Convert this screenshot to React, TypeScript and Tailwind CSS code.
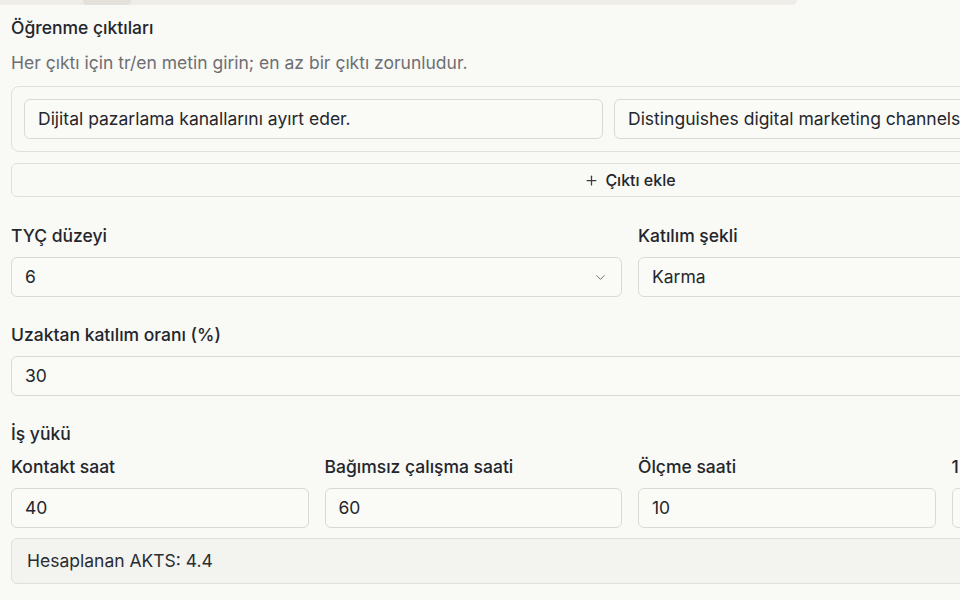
import React from "react";
import { ChevronDown, Plus } from "lucide-react";

const inputCls =
  "h-[40px] w-full rounded-[6px] border border-[#dcd9d2] bg-[#fafaf7] px-[13px] flex items-center text-[17.5px] leading-[20px] text-[#24272d] whitespace-nowrap overflow-hidden";

function Label({ children, className = "" }: { children: React.ReactNode; className?: string }) {
  return (
    <div className={"text-[17.5px] font-medium leading-[20px] text-[#23262c] whitespace-nowrap " + className}>
      {children}
    </div>
  );
}

export default function App() {
  return (
    <div
      className="w-[960px] h-[600px] overflow-hidden bg-[#f9f9f6]"
      style={{ fontFamily: "Inter, 'Noto Sans', sans-serif" }}
    >
      <div className="relative h-[5px] w-[797px] rounded-br-[8px] bg-[#efede8]">
        <div className="absolute left-[83px] top-0 h-[5px] w-[48px] rounded-b-[4px] bg-[#e4e1db]" />
      </div>
      <div className="w-[1238px] ml-[11px]">
        <Label className="mt-[13px]">Öğrenme çıktıları</Label>
        <div className="mt-[15px] text-[17.5px] leading-[20px] text-[#6e6f72] whitespace-nowrap">
          Her çıktı için tr/en metin girin; en az bir çıktı zorunludur.
        </div>
        <div className="mt-[13px] rounded-[8px] border border-[#e2dfd8] p-[12px] grid grid-cols-[1fr_1fr_32px] gap-[11px] items-center">
          <div className={inputCls}>Dijital pazarlama kanallarını ayırt eder.</div>
          <div className={inputCls}>Distinguishes digital marketing channels.</div>
          <div className="h-[32px]" />
        </div>
        <div className="mt-[11px] h-[34px] rounded-[6px] border border-[#e2dfd8] flex items-center justify-center gap-[6px] text-[16px] font-medium text-[#23262c]">
          <Plus size={15} strokeWidth={2} className="text-[#3a3d42]" />
          <span>Çıktı ekle</span>
        </div>

        <div className="mt-[29px] grid grid-cols-2 gap-x-[16px]">
          <div>
            <Label>TYÇ düzeyi</Label>
            <div className={inputCls + " mt-[11px] justify-between pr-[13px]"}>
              <span>6</span>
              <ChevronDown size={15} strokeWidth={1.6} className="text-[#6b6e74]" />
            </div>
          </div>
          <div>
            <Label>Katılım şekli</Label>
            <div className={inputCls + " mt-[11px]"}>Karma</div>
          </div>
        </div>

        <Label className="mt-[28px]">Uzaktan katılım oranı (%)</Label>
        <div className={inputCls + " mt-[11px]"}>30</div>

        <Label className="mt-[28px]">İş yükü</Label>
        <div className="mt-[13px] grid grid-cols-4 gap-x-[16px]">
          {[
            ["Kontakt saat", "40"],
            ["Bağımsız çalışma saati", "60"],
            ["Ölçme saati", "10"],
            ["1 AKTS kaç saat", "25"],
          ].map(([l, v]) => (
            <div key={l}>
              <Label>{l}</Label>
              <div className={inputCls + " mt-[11px]"}>{v}</div>
            </div>
          ))}
        </div>
        <div className="mt-[10px] h-[46px] rounded-[6px] border border-[#e2dfd8] bg-[#f3f3ef] px-[15px] flex items-center text-[17.5px] text-[#2a2d33]">
          Hesaplanan AKTS: 4.4
        </div>
      </div>
    </div>
  );
}
